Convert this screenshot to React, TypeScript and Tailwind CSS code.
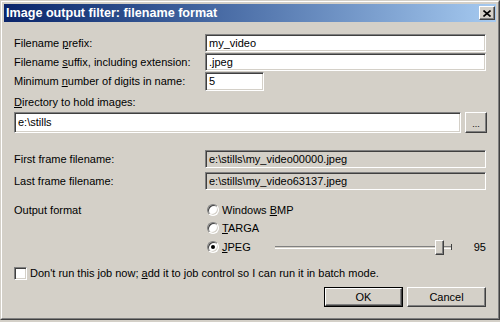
import React from 'react';

const sunken =
  'border border-t-[#808080] border-l-[#808080] border-r-white border-b-white shadow-[inset_1px_1px_0_#404040,inset_-1px_-1px_0_#d4d0c8]';
const raised =
  'border border-t-white border-l-white border-r-[#404040] border-b-[#404040] shadow-[inset_-1px_-1px_0_#808080]';

const Field = ({ value, readOnly, className = '' }: { value: string; readOnly?: boolean; className?: string }) => (
  <div
    className={`${sunken} flex h-full items-center pl-[3px] ${readOnly ? 'bg-[#d4d0c8]' : 'bg-white'} ${className}`}
  >
    {value}
  </div>
);

const Radio = ({ checked, children }: { checked?: boolean; children: React.ReactNode }) => (
  <div className="flex items-center">
    <div className="ml-[2px] flex h-[12px] w-[12px] items-center justify-center rounded-full border border-t-[#808080] border-l-[#808080] border-r-white border-b-white bg-white shadow-[inset_1px_1px_0_#404040,inset_-1px_-1px_0_#d4d0c8]">
      {checked && <div className="h-[4px] w-[4px] rounded-full bg-black" />}
    </div>
    <span className="ml-[3px]">{children}</span>
  </div>
);

const Row = ({ label, children, className = '' }: { label: React.ReactNode; children: React.ReactNode; className?: string }) => (
  <div className={`flex h-[18px] items-center ${className}`}>
    <span className="w-[191px] shrink-0">{label}</span>
    {children}
  </div>
);

export default function App() {
  return (
    <div className="h-[322px] w-[500px] bg-[#d4d0c8] font-['Liberation_Sans',Arial,sans-serif] text-[11px] leading-[13px] text-black">
      <div className="h-[320px] w-[500px] border border-t-[#d4d0c8] border-l-[#d4d0c8] border-r-[#404040] border-b-[#404040]">
        <div className="flex h-full flex-col border border-t-white border-l-white border-r-[#808080] border-b-[#808080] p-[2px]">
          {/* title bar */}
          <div className="flex h-[18px] items-center bg-gradient-to-r from-[#0a246a] to-[#a6caf0] pl-[2px] pr-[1px]">
            <span className="flex-1 text-[12.6px] font-bold text-white">Image output filter: filename format</span>
            <div className={`${raised} flex h-[14px] w-[16px] items-center justify-center bg-[#d4d0c8]`}>
              <svg width="8" height="7" viewBox="0 0 8 7">
                <path d="M0.5 0.5 L7.5 6.5 M7.5 0.5 L0.5 6.5" stroke="black" strokeWidth="1.6" />
              </svg>
            </div>
          </div>

          <div className="flex flex-1 flex-col px-[10px]">
            <Row label={<>Filename <u>p</u>refix:</>} className="mt-[12px]">
              <Field value="my_video" className="flex-1" />
            </Row>
            <Row label={<>Filename <u>s</u>uffix, including extension:</>} className="mt-[1px]">
              <Field value=".jpeg" className="flex-1" />
            </Row>
            <Row label={<>Minimum <u>n</u>umber of digits in name:</>} className="mt-[1px] h-[19px]">
              <Field value="5" className="w-[59px]" />
            </Row>

            <div className="mt-[5px] h-[13px]">
              <u>D</u>irectory to hold images:
            </div>
            <div className="mt-[3px] flex h-[21px] items-center gap-[4px]">
              <Field value={'e:\\stills'} className="h-[19px] flex-1" />
              <div className={`${raised} -mr-[1px] flex h-[21px] w-[22px] items-end justify-center bg-[#d4d0c8] pb-[3px] text-[9px] leading-[9px]`}>
                ...
              </div>
            </div>

            <Row label="First frame filename:" className="mt-[17px]">
              <Field value={'e:\\stills\\my_video00000.jpeg'} readOnly className="flex-1" />
            </Row>
            <Row label="Last frame filename:" className="mt-[4px]">
              <Field value={'e:\\stills\\my_video63137.jpeg'} readOnly className="flex-1" />
            </Row>

            <div className="mt-[11px] flex">
              <div className="flex h-[18px] w-[191px] shrink-0 items-center">Output format</div>
              <div className="flex flex-1 flex-col">
                <div className="flex h-[18px] items-center">
                  <Radio>
                    Windows <u>B</u>MP
                  </Radio>
                </div>
                <div className="flex h-[18px] items-center">
                  <Radio>
                    <u>T</u>ARGA
                  </Radio>
                </div>
                <div className="mt-[1px] flex h-[18px] items-center">
                  <div className="w-[70px] shrink-0">
                    <Radio checked>
                      <u>J</u>PEG
                    </Radio>
                  </div>
                  <div className="relative h-[3px] w-[177px] border-t border-b border-t-[#808080] border-b-white">
                    <div className={`${raised} absolute left-[160px] top-[-7px] h-[15px] w-[9px] bg-[#d4d0c8]`} />
                    <div className="absolute right-0 top-[-3px] h-[6px] w-px bg-[#404040]" />
                  </div>
                  <span className="flex-1 text-right">95</span>
                </div>
              </div>
            </div>

            <div className="mt-[9px] flex h-[16px] items-center">
              <div className={`${sunken} h-[13px] w-[13px] bg-white`} />
              <span className="ml-[3px]">
                Don't run this job now; <u>a</u>dd it to job control so I can run it in batch mode.
              </span>
            </div>

            <div className="mt-[6px] flex justify-end gap-[4px]">
              <div className="h-[20px] w-[79px] border border-black">
                <div className={`${raised} flex h-full items-center justify-center bg-[#d4d0c8]`}>OK</div>
              </div>
              <div className={`${raised} flex h-[20px] w-[79px] items-center justify-center bg-[#d4d0c8]`}>Cancel</div>
            </div>
          </div>
        </div>
      </div>
    </div>
  );
}
